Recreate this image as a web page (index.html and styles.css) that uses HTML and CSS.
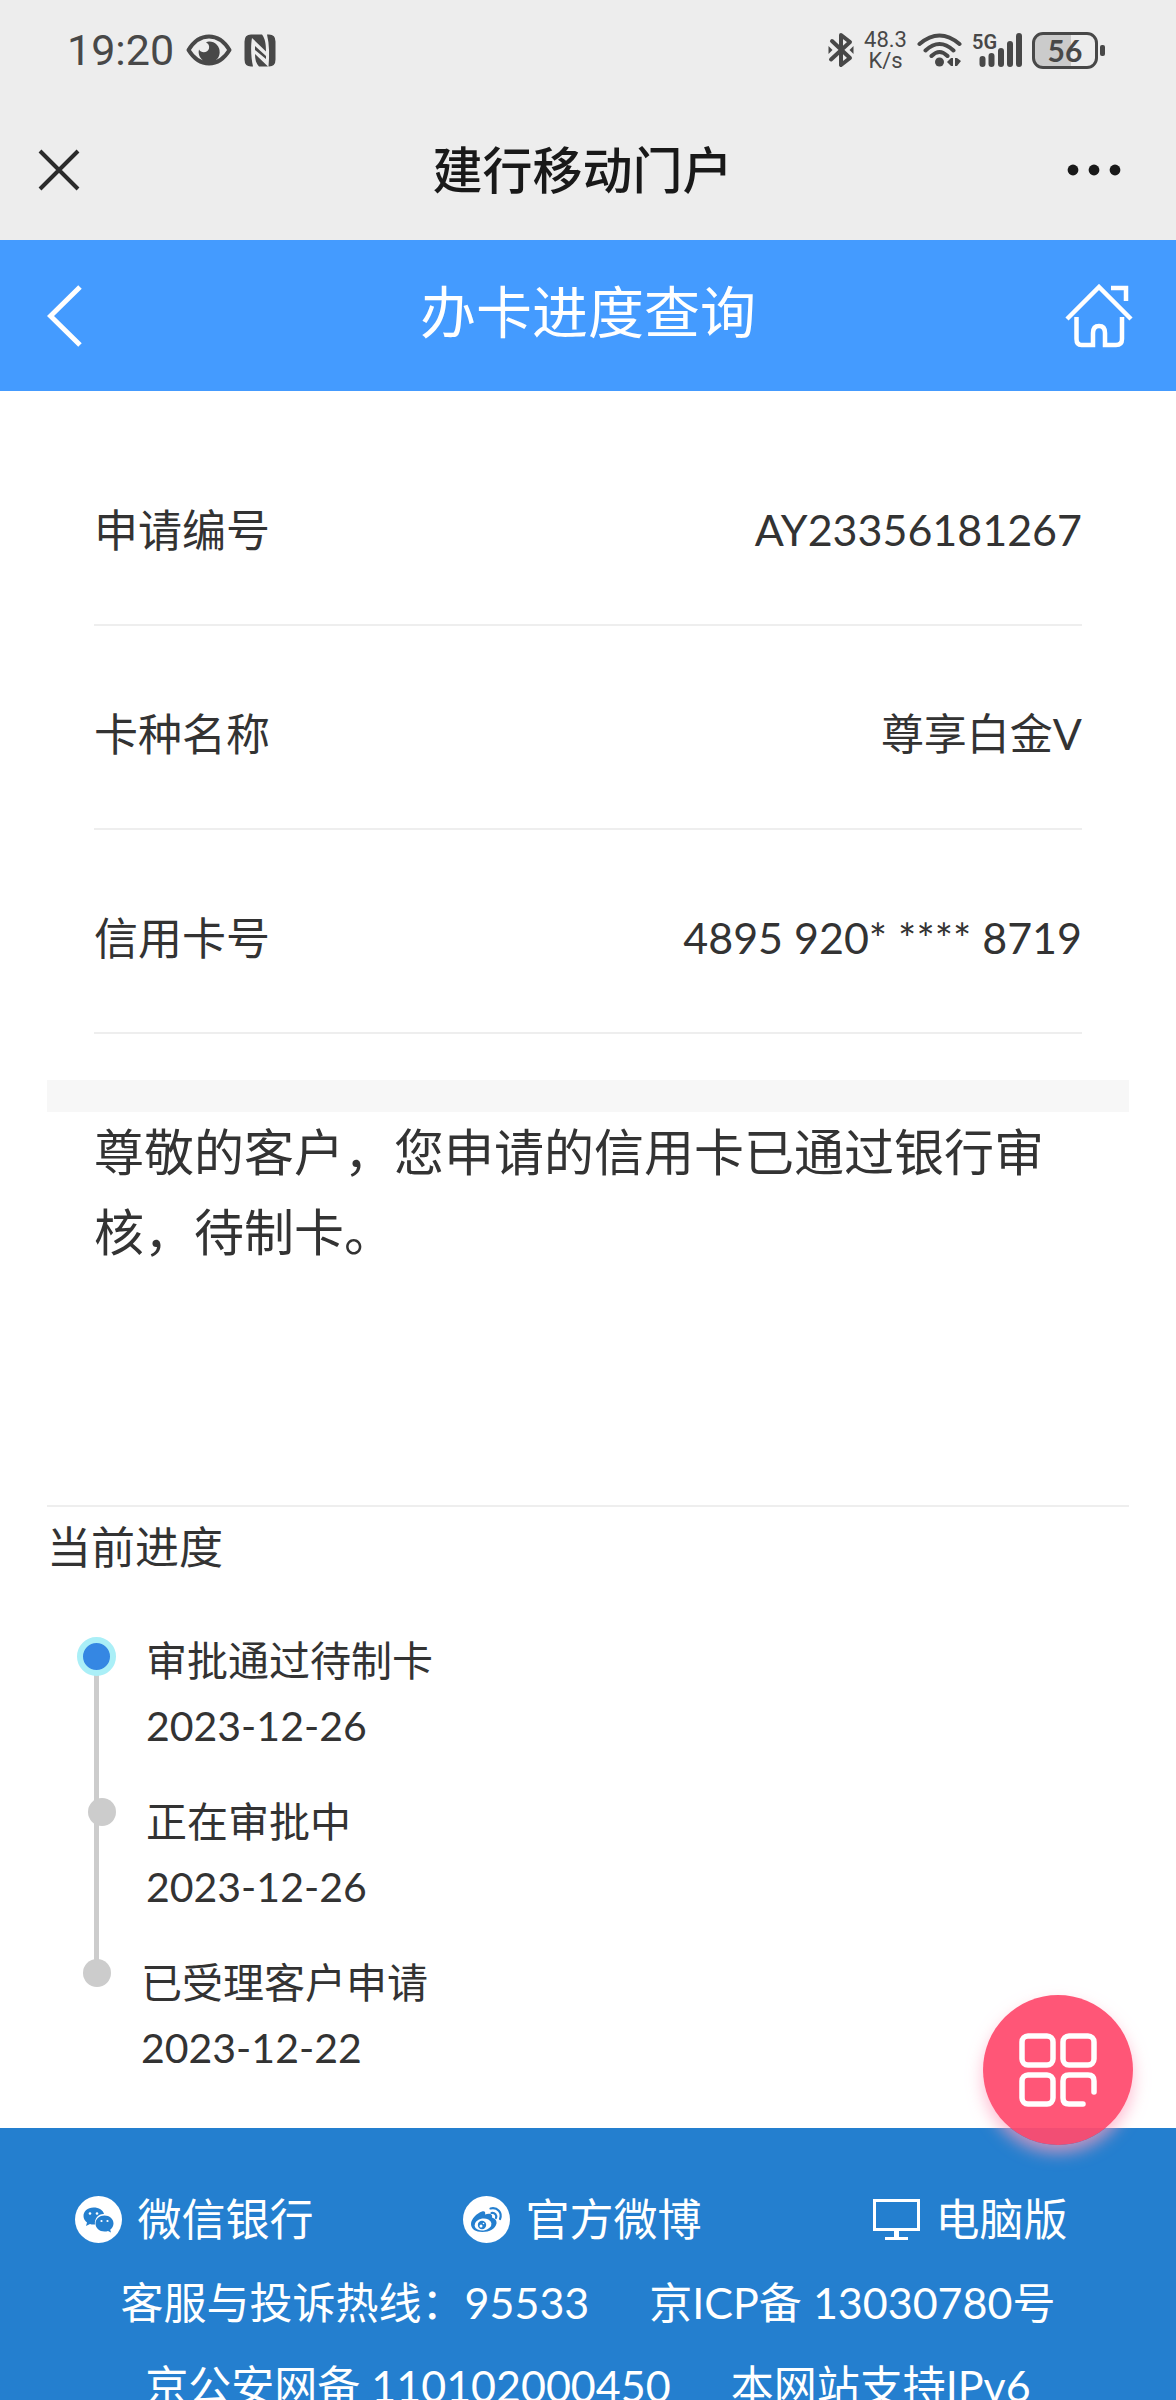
FILE: index.html
```html
<!DOCTYPE html>
<html lang="zh-CN">
<head>
<meta charset="utf-8">
<meta name="viewport" content="width=device-width, initial-scale=1">
<title>办卡进度查询</title>
<link rel="stylesheet" href="styles.css">
</head>
<body>
<div class="app">
  <div class="status-bar">
    <div class="status-group">
      <span class="clock">19:20</span>
      <svg class="icon-eye" width="46" height="32" viewBox="0 0 46 32" aria-hidden="true">
        <path d="M2.500 16C8 7 15 2.500 23 2.500S38 7 43.500 16C38 25 31 29.500 23 29.500S8 25 2.500 16z" fill="none" stroke="#484848" stroke-width="4" stroke-linejoin="round"/>
        <path d="M23 7.500a10.500 10.500 0 1 1-10 8c2 4 9 3.500 10-1 .6-3-.5-5-3-6q1.500-1 3-1z" fill="#484848"/>
        <path d="M16 26h15l-3 4h-9z" fill="#484848"/>
      </svg>
      <svg class="icon-nfc" width="32" height="33" viewBox="0 0 32 33" aria-hidden="true">
        <path d="M7 .5h11c3 4 4 9 4 17L8 4C6.500 12 7 24 9 32.500H7q-6.500 0-6.500-7v-18q0-7 6.500-7z" fill="#484848"/>
        <path d="M23 .5h2q6.500 0 6.500 7v18q0 7-6.500 7h-.5c1-11 1-22-1.500-32z" fill="#484848"/>
        <path d="M11 12l11 10v3L11 16zM11 20l13 12.500h-9c-3-3-4-7-4-12.500z" fill="#484848"/>
      </svg>
    </div>
    <div class="status-group status-right">
      <svg width="26" height="36" viewBox="0 0 26 36" aria-hidden="true">
        <path d="M4 9l18 17-9 7V3l9 7L3 27.500" fill="none" stroke="#484848" stroke-width="4" stroke-linecap="round" stroke-linejoin="round"/>
        <path d="M.5 14v8l4-4zM25.500 14v8l-4-4z" fill="#484848"/>
      </svg>
      <span class="speed">48.3<br>K/s</span>
      <svg width="45" height="36" viewBox="0 0 45 36" aria-hidden="true">
        <path d="M2.500 12q20-17 40 0M8.500 18.500q14-13 28 0M14.500 24q8-8 16 0" fill="none" stroke="#484848" stroke-width="4" stroke-linecap="round"/>
        <circle cx="22.500" cy="30" r="4.500" fill="#484848"/>
        <path d="M36 26v8h-2l-4-4 4-4zM38 26h2l4 3-4 5h-2z" fill="#484848"/>
      </svg>
      <span class="signal">
        <span class="signal-label">5G</span>
        <svg width="50" height="36" viewBox="0 0 50 36" aria-hidden="true">
          <path d="M10.500 27v5M19.500 24v8M29 19v13M38 12v20M47 4v28" stroke="#484848" stroke-width="6" stroke-linecap="round"/>
        </svg>
      </span>
      <span class="battery"><span class="battery-level">56</span></span>
    </div>
  </div>

  <header class="wx-bar">
    <button class="plain close" type="button" aria-label="关闭">
      <svg width="42" height="42" viewBox="0 0 42 42" aria-hidden="true"><path d="M2 2l38 38M40 2L2 40" stroke="#2b2b2b" stroke-width="4"/></svg>
    </button>
    <span class="wx-title">建行移动门户</span>
    <button class="plain" type="button" aria-label="更多">
      <svg width="54" height="12" viewBox="0 0 54 12" aria-hidden="true"><circle cx="6" cy="6" r="5.400" fill="#191919"/><circle cx="27" cy="6" r="5.400" fill="#191919"/><circle cx="48" cy="6" r="5.400" fill="#191919"/></svg>
    </button>
  </header>

  <div class="page-bar">
    <a class="page-link" href="#" aria-label="返回">
      <svg width="36" height="62" viewBox="0 0 36 62" aria-hidden="true"><path d="M33 2L3.500 31 33 60" fill="none" stroke="#fff" stroke-width="5"/></svg>
    </a>
    <h1 class="page-title">办卡进度查询</h1>
    <a class="page-link" href="#" aria-label="首页">
      <svg width="68" height="64" viewBox="0 0 68 64" aria-hidden="true"><path d="M2 35L34 3l32 32M46 4h15v13M11.500 33v22q0 6 5 6H28V49q0-7 6-7t6 7v12h11q6 0 6-6V33" fill="none" stroke="#fff" stroke-width="4.500"/></svg>
    </a>
  </div>

  <main class="content">
    <dl class="info">
      <div class="info-row"><dt>申请编号</dt><dd>AY23356181267</dd></div>
      <div class="info-row"><dt>卡种名称</dt><dd>尊享白金V</dd></div>
      <div class="info-row"><dt>信用卡号</dt><dd>4895 920* **** 8719</dd></div>
    </dl>
    <p class="message">尊敬的客户，您申请的信用卡已通过银行审核，待制卡。</p>
    <section class="progress">
      <h2 class="progress-title">当前进度</h2>
      <ol class="steps">
        <li class="step step-current"><span class="dot"></span><div>审批通过待制卡<br><time>2023-12-26</time></div></li>
        <li class="step step-middle"><span class="dot"></span><div>正在审批中<br><time>2023-12-26</time></div></li>
        <li class="step"><span class="dot"></span><div>已受理客户申请<br><time>2023-12-22</time></div></li>
      </ol>
    </section>
  </main>

  <footer class="footer">
    <nav class="links">
      <a class="link" href="#">
        <svg width="47" height="47" viewBox="0 0 47 47" aria-hidden="true">
          <circle cx="23.500" cy="23.500" r="23.500" fill="#fff"/>
          <path d="M18.500 11.500c-6 0-10 4-10 8.500 0 3 1.500 5 3.500 6.500L11 30l4-2q2 .8 5 .5c-1-6 4-11 9-10.500-1-4-5-6.500-10.500-6.500z" fill="#247fcf"/>
          <path d="M29.500 19.500c-5 0-9 3.500-9 8s4 8 9 8q2 0 3.500-.5l3 1.500-.8-2.800c2-1.500 3.300-3.700 3.300-6.200 0-4.500-4-8-9-8z" fill="#247fcf"/>
          <circle cx="15" cy="17.500" r="1.300" fill="#fff"/><circle cx="22" cy="17.500" r="1.300" fill="#fff"/><circle cx="26.500" cy="25" r="1.100" fill="#fff"/><circle cx="32.500" cy="25" r="1.100" fill="#fff"/>
        </svg>
        微信银行
      </a>
      <a class="link" href="#">
        <svg width="47" height="47" viewBox="0 0 47 47" aria-hidden="true">
          <circle cx="23.500" cy="23.500" r="23.500" fill="#fff"/>
          <path d="M19 15.500c2-1 4 0 3 3 4-1.500 8-1 7 3 3 1 5 3 4.500 6-1 5-7 8.500-14 8.500S8 33 8 28s6-11 11-12.500z" fill="#247fcf"/>
          <ellipse cx="20" cy="28.500" rx="8.500" ry="6" fill="#fff" transform="rotate(-8 20 28.500)"/>
          <circle cx="19" cy="29" r="4.200" fill="#247fcf"/><circle cx="18" cy="30" r="1.500" fill="#fff"/><circle cx="20.500" cy="27.500" r=".8" fill="#fff"/>
          <path d="M27.500 12.500c7-1.500 12 4 9.500 10.500M28.500 17c3.500-.5 5.500 2 4.500 5" fill="none" stroke="#247fcf" stroke-width="2.200" stroke-linecap="round"/>
        </svg>
        官方微博
      </a>
      <a class="link" href="#">
        <svg width="47" height="41" viewBox="0 0 47 41" aria-hidden="true"><path d="M1.500 1.500h44v29h-44z" fill="none" stroke="#fff" stroke-width="3"/><path d="M21 31h5v7h9v3H12v-3h9z" fill="#fff"/></svg>
        电脑版
      </a>
    </nav>
    <p class="legal"><span>客服与投诉热线：95533</span><a href="#">京ICP备 13030780号</a></p>
    <p class="legal"><a href="#">京公安网备 110102000450</a><span>本网站支持IPv6</span></p>
  </footer>

  <button class="fab" type="button" aria-label="菜单">
    <svg width="78" height="74" viewBox="0 0 78 74" aria-hidden="true">
      <g fill="none" stroke="#fff" stroke-width="5.500" stroke-linecap="round">
        <rect x="3" y="3" width="31" height="29" rx="6"/><rect x="44" y="3" width="31" height="29" rx="6"/><rect x="3" y="42" width="31" height="29" rx="6"/>
        <path d="M75 59V48q0-6-6-6H50q-6 0-6 6v17q0 6 6 6h14"/>
      </g>
    </svg>
  </button>
</div>
</body>
</html>
```

FILE: styles.css
```css
* {
  box-sizing: border-box;
}

body,
h1,
h2,
p,
dl,
dd,
ol {
  margin: 0;
  padding: 0;
}

body {
  background: #fff;
  color: #333;
  font-family: Lato, "Noto Sans CJK SC", sans-serif;
  font-size: 44px;
  line-height: 66px;
}

a {
  color: inherit;
  text-decoration: none;
}

svg {
  display: block;
  flex: none;
}

.app {
  display: flex;
  flex-direction: column;
  height: 100vh;
  overflow: hidden;
}

.app > * {
  flex: none;
}

/* System status bar */
.status-bar {
  display: flex;
  justify-content: space-between;
  align-items: center;
  height: 100px;
  padding: 0 71px 0 67px;
  background: #ededed;
  color: #484848;
  font-family: Roboto, sans-serif;
}

.status-group {
  display: flex;
  align-items: center;
  gap: 12px;
}

.status-right {
  gap: 10px;
}

.clock {
  font-size: 43px;
  font-weight: 400;
}

.speed {
  font-size: 22px;
  line-height: 21px;
  text-align: center;
}

.signal {
  position: relative;
}

.signal-label {
  position: absolute;
  top: 0;
  left: 0;
  font-size: 20px;
  line-height: 20px;
  font-weight: 600;
}

.battery {
  display: flex;
  align-items: center;
  gap: 2px;
}

.battery::after {
  content: "";
  width: 5px;
  height: 11px;
  border-radius: 2px;
  background: #484848;
}

.battery-level {
  width: 66px;
  height: 37px;
  border: 3px solid #484848;
  border-radius: 11px;
  background: linear-gradient(to right, #cbcbcb 60%, transparent 60%);
  font: 700 30px/31px Lato, sans-serif;
  text-align: center;
}

/* Browser title bar */
.wx-bar {
  display: flex;
  justify-content: space-between;
  align-items: center;
  height: 140px;
  padding: 0 55px 0 38px;
  background: #ededed;
}

.plain {
  padding: 0;
  border: 0;
  background: none;
}

.close {
  width: 60px;
}

.wx-title {
  color: #191919;
  font-size: 50px;
  font-weight: 500;
}

/* Page heading */
.page-bar {
  display: flex;
  justify-content: space-between;
  align-items: center;
  height: 151px;
  padding: 0 43px 0 47px;
  background: #449bff;
  color: #fff;
}

.page-link {
  display: flex;
  width: 68px;
}

.page-title {
  padding: 0 4px 8px 0;
  font-size: 56px;
  font-weight: 400;
  line-height: 80px;
}

/* Application details */
.content {
  padding: 31px 47px 0;
}

.info {
  padding: 0 47px 46px;
  border-bottom: 32px solid #f7f7f7;
}

.info-row {
  display: flex;
  justify-content: space-between;
  padding: 75px 0 61px;
  border-bottom: 2px solid #eee;
}

.info-row dd {
  font-size: 43px;
}

.message {
  min-height: 393px;
  padding: 0 47px;
  font-size: 50px;
  line-height: 80px;
}

/* Progress timeline */
.progress {
  border-top: 2px solid #eee;
}

.progress-title {
  padding-top: 7px;
  font-size: 44px;
  font-weight: 400;
}

.steps {
  display: grid;
  gap: 31px;
  padding: 48px 0 48px 36px;
  font-size: 41px;
  line-height: 65px;
  list-style: none;
}

.step {
  display: flex;
  gap: 30px;
  position: relative;
}

.step-middle {
  padding-left: 5px;
}

.step-current {
  margin-left: -6px;
}

.step:not(:last-child)::before {
  content: "";
  position: absolute;
  top: 20px;
  left: 11px;
  width: 5px;
  height: 161px;
  background: #ccc;
}

.step-current::before {
  margin-left: 6px;
}

.dot {
  position: relative;
  flex: none;
  width: 28px;
  height: 28px;
  margin-top: 9px;
  border-radius: 50%;
  background: #ccc;
}

.step-current .dot {
  width: 39px;
  height: 39px;
  border: 6px solid #aaeff7;
  background: #3587e3;
}

/* Footer */
.footer {
  padding-top: 50px;
  background: #247fcf;
  color: #fff;
  line-height: 83px;
}

.links {
  display: grid;
  grid-template-columns: repeat(3, 1fr);
  padding-right: 12px;
}

.link {
  display: flex;
  justify-content: center;
  align-items: center;
  gap: 16px;
}

.legal {
  display: flex;
  justify-content: center;
  gap: 60px;
  font-size: 43px;
}

/* Floating menu button */
.fab {
  display: grid;
  place-items: center;
  position: fixed;
  right: 43px;
  bottom: 255px;
  width: 150px;
  height: 150px;
  padding: 0;
  border: 0;
  border-radius: 50%;
  background: rgba(255, 75, 110, 0.94);
  box-shadow: 0 8px 16px rgba(255, 160, 190, 0.7);
}
```
